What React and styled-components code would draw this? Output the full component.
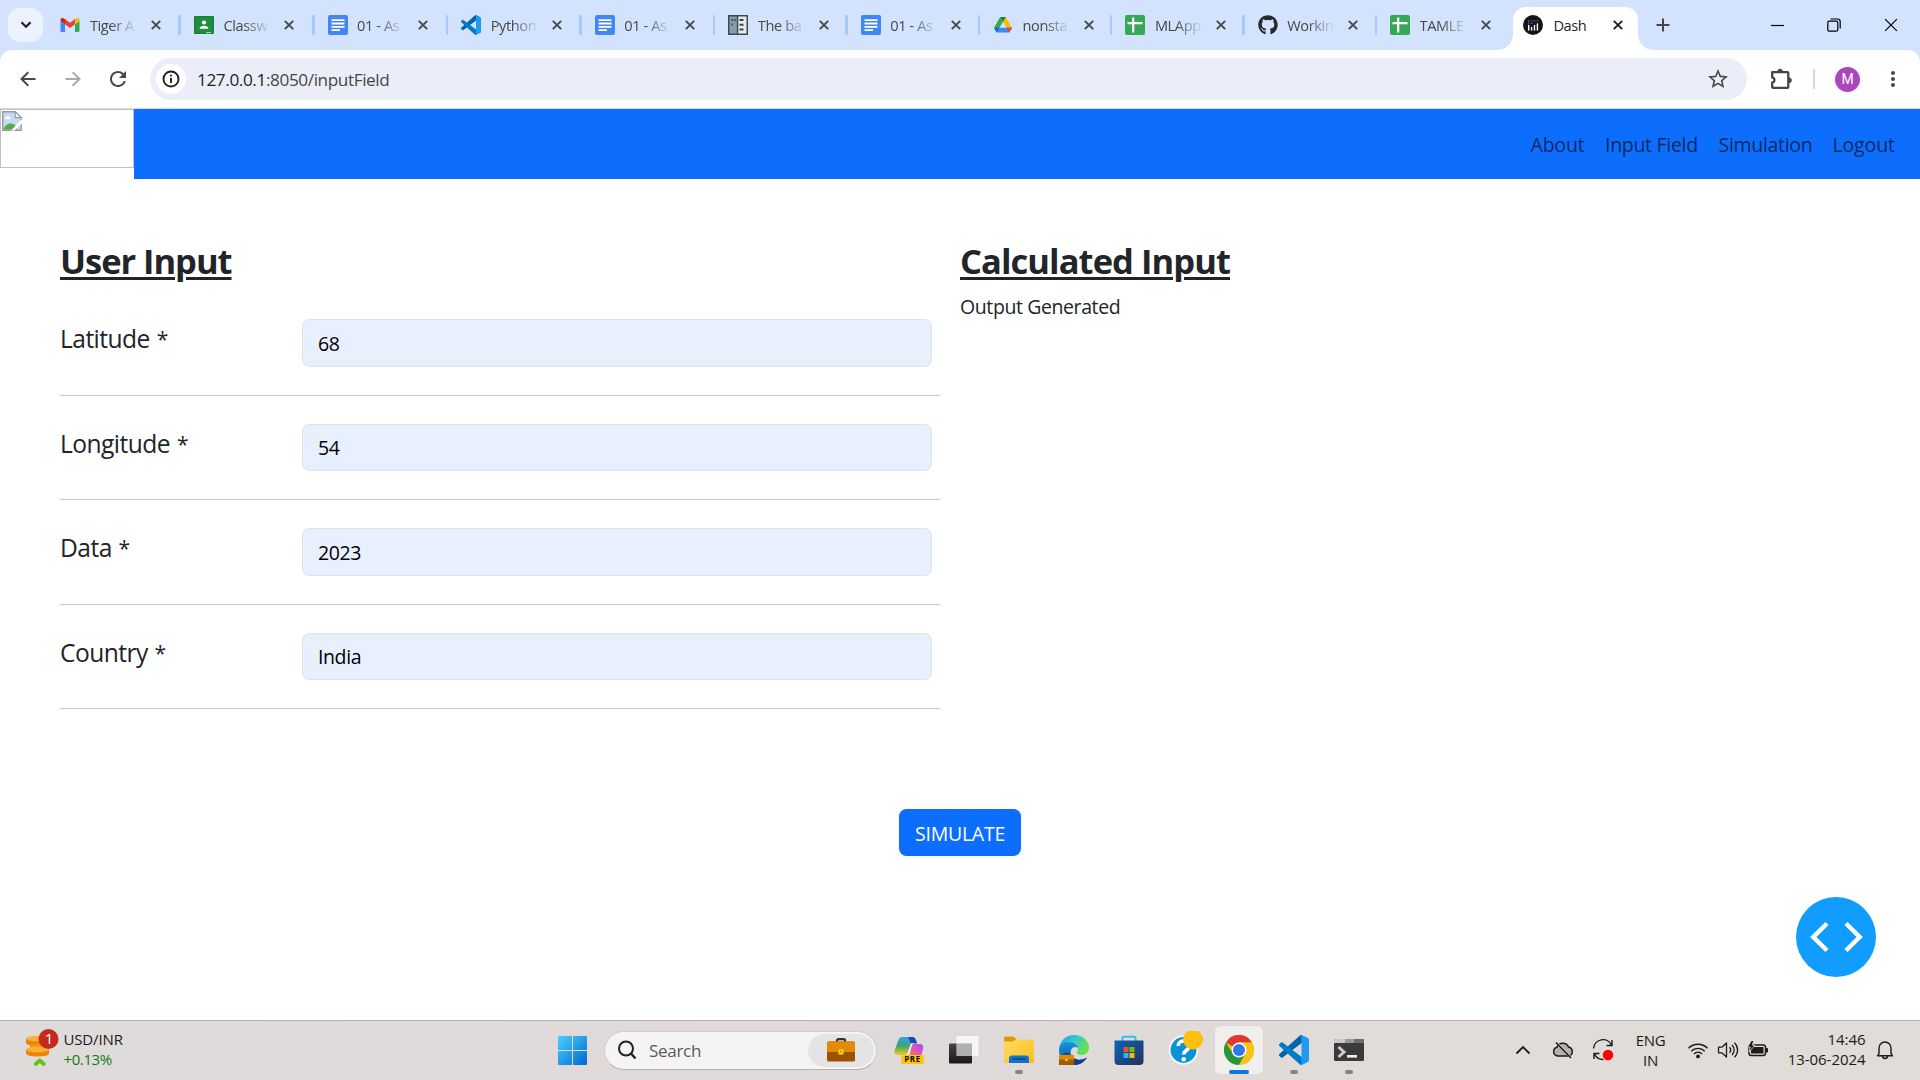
import React from "react";
import styled, { createGlobalStyle } from "styled-components";
import { FaGithub } from "react-icons/fa";
import { MdStarBorder, MdMoreVert, MdRefresh } from "react-icons/md";

const Global = createGlobalStyle`
  * { box-sizing: border-box; }
  html, body { margin: 0; padding: 0; }
  body {
    width: 1920px; height: 1080px; overflow: hidden; background: #fff;
    font-family: "Open Sans", "Noto Sans", sans-serif; color: #212529;
  }
  svg { display: block; flex: none; }
`;

const Screen = styled.div`
  width: 1920px; height: 1080px; display: flex; flex-direction: column; overflow: hidden;
`;

/* ---------- browser chrome ---------- */
const TabStrip = styled.div`
  height: 50px; flex: none; background: #d3e3fd; display: flex; align-items: flex-start;
`;
const TabSearch = styled.div`
  margin: 8px 4.4px 0 8px; width: 35px; height: 34px; border-radius: 12px; background: #ecf2fe;
  display: flex; align-items: center; justify-content: center;
`;
const Tab = styled.div`
  width: ${p => p.$w}px; height: 50px; padding-left: 13px; display: flex; align-items: center; flex: none;
`;
const ActiveTab = styled(Tab)`
  position: relative; margin: 7px 0 0 4px; width: 125px; height: 43px; padding: 0 0 7px 10px;
  background: #fff; border-radius: 13px 13px 0 0;
  &::before, &::after {
    content: ""; position: absolute; bottom: 0; width: 15px; height: 15px;
  }
  &::before { left: -15px; background: radial-gradient(circle at 0 0, transparent 14.5px, #fff 15px); }
  &::after { right: -15px; background: radial-gradient(circle at 100% 0, transparent 14.5px, #fff 15px); }
`;
const TabTitle = styled.span`
  margin-left: ${p => (p.$active ? 10 : 9.5)}px; width: ${p => p.$w || 46}px; font-size: 14.6px; line-height: 20px; letter-spacing: ${p => p.$ls ?? -0.4}px;
  white-space: nowrap; color: ${p => (p.$active ? "#1f1f1f" : "#474747")};
  ${p => !p.$active && "-webkit-mask-image: linear-gradient(90deg, #000 45%, rgba(0,0,0,.1) 98%);"}
`;
const CloseSlot = styled.span`
  margin-left: ${p => p.$ml ?? 15}px; width: 12px; display: flex;
`;
const TabDivider = styled.span`
  margin-left: auto; width: 2.5px; height: 20px; border-radius: 1px; background: #a8c7fa;
`;
const NewTab = styled.div`
  margin: 18px 0 0 18px; width: 14px; height: 14px;
`;
const WindowButtons = styled.div`
  margin: 17px 22px 0 auto; display: flex; gap: 43px; align-items: center; height: 15px;
`;
const Toolbar = styled.div`
  height: 59px; flex: none; background: #d3e3fd;
`;
const ToolbarInner = styled.div`
  height: 59px; border-radius: 12px 12px 0 0; background: #fff; border-bottom: 1px solid #d5dbe0;
  display: flex; align-items: center;
`;
const NavIcon = styled.div`
  width: ${p => p.$w}px; display: flex; justify-content: center;
`;
const Omnibox = styled.div`
  width: 1597px; height: 42px; border-radius: 21px; background: #ebeef8;
  display: flex; align-items: center; padding: 0 17.5px 0 6px;
`;
const InfoBadge = styled.div`
  width: 30px; height: 30px; border-radius: 50%; background: #fff; display: flex; align-items: center; justify-content: center;
`;
const Url = styled.span`
  margin: 2px 0 0 11px; font-size: 17.2px; line-height: 24px; color: #474747; flex: 1; letter-spacing: ${p => p.$ls}px;
  b { font-weight: 400; color: #1f1f1f; }
`;
const ToolbarRule = styled.span`
  width: 2px; height: 20px; background: #c6dafc; margin: 0 20px 0 21px;
`;
const Avatar = styled.span`
  width: 25px; height: 25px; border-radius: 50%; background: #ab47bc; color: #fff; font: 400 14px/25px Roboto, sans-serif; text-align: center;
`;

/* ---------- page ---------- */
const NavBar = styled.nav`
  height: 70px; flex: none; background: #0d6efd; display: flex; align-items: stretch; padding-right: 25px;
`;
const Brand = styled.div`
  width: 134px; background: #fff; margin-right: auto;
`;
const MissingImage = styled.div`
  width: 134px; height: 59px; border: 1px solid #c0c0c0; padding: 1px;
`;
const NavLinkText = styled.a`
  width: ${p => p.$w}px; margin-left: 20.5px; font-size: 19.5px; line-height: 71px; letter-spacing: ${p => p.$ls}px;
  white-space: nowrap; color: rgba(0, 0, 0, 0.65);
`;
const Page = styled.main`
  height: 841px; flex: none; padding: 61px 60px 0; position: relative; background: #fff;
`;
const Columns = styled.div`
  display: grid; grid-template-columns: 880px 1fr; column-gap: 20px; height: 539px;
`;
const Column = styled.section`
  display: flex; flex-direction: column; align-items: stretch;
`;
const Heading = styled.h2`
  margin: 0; height: ${p => p.$h}px; font-size: 34.5px; line-height: 42px; font-weight: 700; letter-spacing: ${p => p.$ls}px;
  text-decoration: underline; text-decoration-thickness: 3px; text-underline-offset: 3px; color: #212529; white-space: nowrap;
`;
const Output = styled.div`
  font-size: 19.5px; line-height: 30px; letter-spacing: ${p => p.$ls}px;
`;
const Field = styled.div`
  height: 76.5px; margin-bottom: 28px; border-bottom: 1px solid #c7c8c9; display: flex; align-items: flex-start;
`;
const Label = styled.label`
  width: 242px; font-size: 24.6px; line-height: 40px; letter-spacing: -0.55px; white-space: nowrap;
`;
const Star = styled.span`
  margin-left: 1px; font-size: 21px; vertical-align: 1px;
`;
const Input = styled.input`
  width: 630px; height: 47.5px; border: 1.25px solid #dee2e6; border-radius: 7.5px; background: #e8f0fe; outline: 0;
  padding: 0 15px 0; font: 19.5px "Open Sans", "Noto Sans", sans-serif; letter-spacing: -0.4px; color: #000;
`;
const Simulate = styled.button`
  display: block; margin: 30px auto 0; width: 122px; height: 47px; border: 0; border-radius: 7.5px; background: #0d6efd; color: #fff;
  padding: 1px 0 0; font: 19.5px "Open Sans", "Noto Sans", sans-serif; letter-spacing: ${p => p.$ls}px;
`;
const DebugButton = styled.div`
  position: absolute; right: 44px; bottom: 43px; width: 80px; height: 80px; border-radius: 50%; background: #119dff;
`;

/* ---------- taskbar ---------- */
const Taskbar = styled.footer`
  height: 60px; flex: none; border-top: 1px solid #b0adac; display: flex; align-items: center; padding-bottom: 1px;
  background: linear-gradient(90deg, #dfdbda 0%, #dfdad9 50%, #e1dcd7 73%, #e0dcd8 100%);
`;
const Widget = styled.div`
  width: 545px; padding-left: 25px; display: flex; align-items: center; margin-top: -3px;
`;
const WidgetText = styled.div`
  margin-left: 4.5px; font-size: 15px; line-height: 20px; letter-spacing: -0.15px; color: #1b1b1b;
  div + div { color: #107c10; letter-spacing: -0.4px; }
`;
const Cell = styled.div`
  position: relative; width: ${p => p.$w || 55}px; height: 58px; display: flex; align-items: center; justify-content: center;
`;
const Tile = styled(Cell)`
  &::after {
    content: ""; position: absolute; left: 50%; bottom: 5px; height: 4px; border-radius: 2px;
    width: ${p => (p.$active ? 20 : 8)}px; margin-left: ${p => (p.$active ? -10 : -4)}px;
    background: ${p => (p.$active ? "#0a78d4" : "#868382")};
    display: ${p => (p.$running || p.$active ? "block" : "none")};
  }
`;
const ActivePlate = styled.div`
  width: 48px; height: 48px; border-radius: 5px; background: #f1efee; box-shadow: 0 0 1px #aaa6; display: flex; align-items: center; justify-content: center;
`;
const SearchPill = styled.div`
  width: 273px; height: 39px; margin: 0 4.5px 0 4px; border-radius: 20px; background: #f5f4f4; border: 1px solid #cfcbca; border-bottom-color: #b5b1b0;
  display: flex; align-items: center; padding: 0 2px 0 12px; font-size: 17px; color: #5a5a5a; letter-spacing: -0.3px;
`;
const SearchLabel = styled.span`
  margin: 0 0 0 12px; flex: 1;
`;
const SearchBadge = styled.span`
  width: 66px; height: 33px; border-radius: 17px; background: #e5e4e4; display: flex; align-items: center; justify-content: center;
`;
const Tray = styled.div`
  margin-left: 126px; display: flex; align-items: center; color: #1b1b1b;
`;
const TrayText = styled.div`
  width: ${p => p.$w}px; font-size: 15px; line-height: 20px; text-align: ${p => p.$align || "center"}; letter-spacing: ${p => p.$ls || 0}px; margin-right: ${p => p.$mr || 0}px;
  margin-top: ${p => p.$mt ?? -1}px;
`;

/* ---------- icons ---------- */
const Cross = ({ s = 10, w = 1.9, c = "#474747" }) => (
  <svg width={s} height={s} viewBox="0 0 10 10"><path d="M.8 .8 9.2 9.2M9.2 .8 .8 9.2" stroke={c} strokeWidth={w} /></svg>
);
const Gmail = () => (
  <svg width="20" height="20" viewBox="0 0 20 20">
    <path d="M.5 6v9.8c0 .7.5 1.2 1.2 1.2H5V9.2z" fill="#4285f4" />
    <path d="M19.5 6v9.8c0 .7-.5 1.2-1.2 1.2H15V9.2z" fill="#34a853" />
    <path d="M15 4.2v5l4.5-3.3V5c0-2-2-2.600-3.400-1.600z" fill="#fbbc04" />
    <path d="M5 9.200V4l5 3.800L15 4v5.200L10 13z" fill="#ea4335" />
    <path d="M.5 5v1L5 9.200v-5L3.900 3.400C2.500 2.400.5 3 .5 5z" fill="#c5221f" />
  </svg>
);
const Classroom = () => (
  <svg width="20" height="20" viewBox="0 0 20 20">
    <rect x="0" y="1" width="20" height="18" rx="1" fill="#188038" /><rect x="1.500" y="2.500" width="17" height="15" fill="#1e8e3e" />
    <circle cx="10" cy="7.500" r="2.100" fill="#fff" /><path d="M5.500 13.800c0-2 2.600-3 4.500-3s4.500 1 4.500 3z" fill="#fff" /><path d="M12 17h5v1.200h-5z" fill="#fff" opacity=".6" />
  </svg>
);
const Docs = () => (
  <svg width="20" height="20" viewBox="0 0 20 20">
    <rect width="20" height="20" rx="2" fill="#4285f4" />
    <path d="M3.500 5.200h13M3.500 8.500h13M3.500 11.900h13M3.500 15.200h8.500" stroke="#fff" strokeWidth="1.800" />
  </svg>
);
const Sheets = () => (
  <svg width="20" height="20" viewBox="0 0 20 20">
    <rect width="20" height="20" rx="2" fill="#34a853" /><path d="M8.200 2.500v15M2.500 8.200h15" stroke="#fff" strokeWidth="2.200" />
  </svg>
);
const Drive = () => (
  <svg width="20" height="20" viewBox="0 0 20 20">
    <path d="M7.200 2h5.600L10 6.800 3.800 17.400 1 12.700z" fill="#34a853" />
    <path d="M7.200 2h5.600L19 12.700h-5.600z" fill="#fbbc04" />
    <path d="M7.200 2h5.600L10 6.800z" fill="#188038" />
    <path d="M6.600 12.700H19l-2.800 4.700H3.800z" fill="#4285f4" />
    <path d="M13.400 12.700H19l-2.800 4.700z" fill="#ea4335" />
    <path d="M6.600 12.700H1l2.800 4.700z" fill="#1967d2" />
  </svg>
);
const VsCode = ({ s = 20 }) => (
  <svg width={s} height={s} viewBox="0 0 100 100">
    <path d="M96.500 10.800 75.900.9a6.200 6.200 0 0 0-7.100 1.200L1.300 63.600a4.200 4.200 0 0 0 0 6.200l5.500 5a4.200 4.200 0 0 0 5.300.2L93.400 13.400c2.700-2.100 6.600-.1 6.600 3.300v-.3a6.300 6.300 0 0 0-3.500-5.600z" fill="#0065a9" />
    <path d="m96.500 89.200-20.600 9.900a6.200 6.200 0 0 1-7.100-1.200L1.300 36.400a4.200 4.200 0 0 1 0-6.200l5.500-5a4.200 4.200 0 0 1 5.300-.2l81.300 61.600c2.700 2.100 6.600.1 6.600-3.300v.3a6.300 6.300 0 0 1-3.500 5.600z" fill="#007acc" />
    <path d="M75.900 99.100a6.200 6.200 0 0 1-7.100-1.200c2.300 2.300 6.200.7 6.200-2.600V4.700c0-3.300-3.900-4.900-6.200-2.600A6.200 6.200 0 0 1 75.900.9l20.600 9.900a6.300 6.300 0 0 1 3.500 5.600v67.200a6.300 6.300 0 0 1-3.500 5.600z" fill="#1f9cf0" />
  </svg>
);
const Building = () => (
  <svg width="20" height="20" viewBox="0 0 20 20">
    <path d="M0 0h20v20H0z" fill="#3c4b52" /><path d="M1.500 1.500h7.300v17H1.500z" fill="#8a9ba8" /><path d="M10.300 1.500h8.200v17h-8.200z" fill="#e6eaec" />
    <path d="M3.500 4h1.500v2H3.500zM6.200 4h1.500v2H6.200zM3.500 8.500h1.500v2H3.500zM11.500 4h4v2h-4zM11.500 8.800h4v2h-4zM11.500 13.500h4v2h-4z" fill="#37474f" />
  </svg>
);
const DashLogo = () => (
  <svg width="20" height="20" viewBox="0 0 20 20">
    <circle cx="10" cy="10" r="10" fill="#141518" />
    <path d="M5.700 10.500V15M8.600 12.500V15M11.500 10.500V15M14.400 9V15" stroke="#fff" strokeWidth="1.400" strokeLinecap="round" />
    <path d="M5 6h1.400M5 8h1.400" stroke="#ff4fa3" strokeWidth="1.200" /><path d="M8 6h1.400M8 8.500h1.400M10.800 6h1.400M13.700 6h1.400" stroke="#7a6cf0" strokeWidth="1.200" />
  </svg>
);
const Arrow = ({ flip, c }) => (
  <svg width="16" height="16" viewBox="0 0 16 16" transform={flip ? "rotate(180)" : undefined}>
    <path d="M15.500 8H1.800M8.300 1.200 1.500 8l6.800 6.800" fill="none" stroke={c} strokeWidth="2" />
  </svg>
);
const BrokenImage = () => (
  <svg width="20" height="20" viewBox="0 0 20 20">
    <path d="M.7.7h12.500l6 6v12.500H.7z" fill="#c5d9fb" stroke="#9a9a9a" strokeWidth="1.400" />
    <path d="M4 6.500c.3-1.800 3-1.800 3.300-.2 1.500-.2 1.800 1.700.4 2H3.700c-1.300-.2-1-1.700.3-1.800z" fill="#fff" />
    <path d="M1.400 18.500c2-6.500 9.500-8.500 13.600-2v2z" fill="#5aac3c" />
    <path d="M13.200.7v6h6z" fill="#fff" stroke="#9a9a9a" strokeWidth="1.200" /><path d="m20 8-11 11.500h3.500L20 12.500z" fill="#fff" />
  </svg>
);
const Puzzle = () => (
  <svg width="22" height="22" viewBox="0 0 22 22">
    <path d="M2.200 4.200h15.200q.9 0 .9.900v13.800q0 .9-.9.900H3.100q-.9 0-.9-.9v-4.200a2.700 2.700 0 0 0 0-5.300z" fill="none" stroke="#474747" strokeWidth="2.300" strokeLinejoin="round" />
    <path d="M7.600 3.500a2.500 2.500 0 0 1 5 0zM19 9.800a2.500 2.500 0 0 1 0 5z" fill="#474747" stroke="#474747" strokeWidth=".6" />
  </svg>
);
const Coins = () => (
  <svg width="34" height="40" viewBox="0 0 34 40">
    <path d="M1 9.500v4.500c0 1.500 4 3 10 3s13-1.200 13-3V9.500z" fill="#e8860c" /><ellipse cx="12" cy="9.500" rx="11" ry="2.800" fill="#fdb23c" />
    <path d="M5 15v5c0 1 3 2.500 10 2.500s9-1.500 9-2.500v-5z" fill="#f29111" />
    <path d="M1 20.500v4c0 1.700 5 3 11.500 3S24 26.200 24 24.500v-4z" fill="#ea850a" /><ellipse cx="12.500" cy="20.500" rx="11.500" ry="2.900" fill="#fdae33" />
    <path d="m10.800 35 4-3.500 4 3.500" fill="none" stroke="#5cc414" strokeWidth="3.700" strokeLinecap="round" strokeLinejoin="round" />
    <circle cx="23.500" cy="10" r="10" fill="#c42b1c" /><text x="24" y="15.300" textAnchor="middle" fontSize="15" fill="#fff">1</text>
  </svg>
);
const Windows = () => (
  <svg width="29" height="29" viewBox="0 0 29 29">
    <defs><linearGradient id="win" x1="0" y1="0" x2="1" y2="1"><stop offset="0" stopColor="#4cd0ff" /><stop offset="1" stopColor="#0067cf" /></linearGradient></defs>
    <path d="M1 0h13v14H0V1q0-1 1-1zM15 0h13q1 0 1 1v13H15zM0 15h14v14H1q-1 0-1-1zM15 15h14v13q0 1-1 1H15z" fill="url(#win)" />
  </svg>
);
const Magnifier = () => (
  <svg width="20" height="20" viewBox="0 0 20 20"><circle cx="9" cy="8.500" r="7" fill="none" stroke="#222" strokeWidth="2" /><path d="m14 13.500 4.500 5" stroke="#222" strokeWidth="2.400" /></svg>
);
const Briefcase = ({ s = 28 }) => (
  <svg width={s} height={s * 0.857} viewBox="0 0 28 24">
    <path d="M10 4V2.500Q10 1.200 11.500 1.200h5Q18 1.200 18 2.500V4" fill="none" stroke="#333" strokeWidth="2.200" />
    <rect y="3.500" width="28" height="20" rx="1.500" fill="#9c5300" /><path d="M0 14V5q0-1.500 1.500-1.500h25Q28 3.500 28 5v9z" fill="#e58a04" />
    <rect x="11.500" y="11.500" width="5" height="5" fill="#f9dc1c" /><rect x="13" y="13" width="2" height="1.500" fill="#c98a00" />
  </svg>
);
const Copilot = () => (
  <svg width="30" height="30" viewBox="0 0 30 30">
    <defs>
      <linearGradient id="cpA" x1="0" y1="0" x2="0" y2="1"><stop offset="0" stopColor="#29a3ee" /><stop offset=".5" stopColor="#3fa66b" /><stop offset="1" stopColor="#f3c722" /></linearGradient>
      <linearGradient id="cpB" x1="1" y1="0" x2="0" y2="1"><stop offset="0" stopColor="#a04df0" /><stop offset=".6" stopColor="#e359a8" /><stop offset="1" stopColor="#ff8a4c" /></linearGradient>
    </defs>
    <path d="M9 2h9c2.500 0 3.500 2 4.200 4l.8 2h-6l-3 9c-.7 2-2 3-4 3H4C1 20 0 18 .8 15L4 6c.8-2.500 2-4 5-4z" fill="url(#cpA)" />
    <path d="M14 2h4c2.500 0 3.500 2 4.200 4l.8 2.500h-6z" fill="#1a45c8" />
    <path d="M17 8.500h3L16.500 20H11c1.500-.5 2.500-1.500 3-3z" fill="#f4ecef" />
    <path d="M20 9h6c3 0 3.500 2.500 3 5l-2 7H15l2.500-9c.5-2 1-3 2.500-3z" fill="url(#cpB)" />
    <rect x="7" y="20" width="23" height="9" rx="2" fill="#fdc60a" /><text x="18.500" y="27.300" textAnchor="middle" fontSize="8" fontWeight="700" letterSpacing=".5" fill="#111">PRE</text>
  </svg>
);
const TaskView = () => (
  <svg width="30" height="30" viewBox="0 0 30 30">
    <defs><linearGradient id="tv" x1="0" y1="0" x2="0" y2="1"><stop offset="0" stopColor="#454443" /><stop offset="1" stopColor="#181818" /></linearGradient></defs>
    <rect x="0" y="8.500" width="23" height="20" rx="1" fill="url(#tv)" /><rect x="7.500" y="1" width="22" height="20" rx="1" fill="#fff" opacity=".75" /><path d="M7.500 8.500H23V21H7.500z" fill="#999" opacity=".55" />
  </svg>
);
const Explorer = () => (
  <svg width="30" height="28" viewBox="0 0 30 28">
    <defs><linearGradient id="ex" x1="0" y1="0" x2="1" y2="1"><stop offset="0" stopColor="#ffdc62" /><stop offset="1" stopColor="#fbbd1f" /></linearGradient></defs>
    <path d="M0 2q0-1.500 1.500-1.500h8l3 3V9H0z" fill="#dd9a05" /><path d="M0 5.500h9l3-2h16.500Q30 3.500 30 5v22H0z" fill="url(#ex)" />
    <path d="M5 27v-4.500Q5 19.500 8 19.500h14q3 0 3 3V27z" fill="#1173cf" /><path d="M8.500 23h13" stroke="#0a3f80" strokeWidth="1.300" />
  </svg>
);
const Edge = () => (
  <svg width="30" height="30" viewBox="0 0 30 30">
    <defs>
      <linearGradient id="egA" x1="0" y1="0" x2="1" y2=".4"><stop offset="0" stopColor="#1fa2dc" /><stop offset=".5" stopColor="#33c4d4" /><stop offset="1" stopColor="#66e24e" /></linearGradient>
      <linearGradient id="egB" x1="0" y1="0" x2="0" y2="1"><stop offset="0" stopColor="#1394e0" /><stop offset="1" stopColor="#0c55a8" /></linearGradient>
    </defs>
    <path d="M0 14C.5 6 7 0 15 0c9 0 15 6 15 12.500 0 5-3.500 7.500-7 7.500-3 0-5-1-5-2.500 0-1 1-1.500 1-3.500C19 10.500 15.500 7.500 10 7.500 5 7.500 1 10 0 14z" fill="url(#egA)" />
    <path d="M0 15c0-5 4.500-8 9.500-8 5.500 0 9 3 9.500 6-4-3-8.500 1-7 6 1.500 6 8.500 8 16 3.500-2.500 4.500-7 7.500-13 7.500C6.500 30 0 23.500 0 15z" fill="url(#egB)" />
    <path d="M12 19c1.500 5 8.500 8 16 3.500-3 4.500-7 7.500-13 7.500z" fill="#123f86" />
    <rect x="0" y="20" width="15" height="10" fill="#a35a05" /><path d="M0 20h15v4.500H0z" fill="#e08a08" /><path d="M5 20v-1.300h5V20" fill="none" stroke="#333" /><rect x="6.500" y="24" width="2" height="2.200" fill="#ffe11c" />
  </svg>
);
const Store = () => (
  <svg width="30" height="30" viewBox="0 0 30 30">
    <defs><linearGradient id="st" x1="0" y1="0" x2="1" y2="1"><stop offset="0" stopColor="#0a66b5" /><stop offset="1" stopColor="#26305c" /></linearGradient></defs>
    <path d="M8.500 6V3Q8.500 1.800 10 1.800h10q1.500 0 1.500 1.200v3" fill="none" stroke="#2fc1f3" strokeWidth="2" />
    <path d="M.5 5.500h29V26q0 4-4 4h-21q-4 0-4-4z" fill="url(#st)" />
    <path d="M9.500 12h5v5h-5z" fill="#f25022" /><path d="M15.500 12h5v5h-5z" fill="#7fba00" /><path d="M9.500 18h5v5h-5z" fill="#2fb4f2" /><path d="M15.500 18h5v5h-5z" fill="#ffb900" />
  </svg>
);
const Help = () => (
  <svg width="38" height="38" viewBox="0 0 38 38">
    <circle cx="18.500" cy="19" r="14.700" fill="#f4f8fa" /><circle cx="18.500" cy="19" r="12.900" fill="#0a93d4" />
    <path d="M13.200 15c0-7 11.500-6.500 11.500-.5 0 4.500-6 4.500-6 9" fill="none" stroke="#fff" strokeWidth="3.600" /><circle cx="18.700" cy="28.300" r="2.300" fill="#fff" />
    <circle cx="28" cy="10" r="10" fill="#fdc10d" transform="translate(0 -1.500)" />
  </svg>
);
const Chrome = () => (
  <svg width="30" height="30" viewBox="0 0 30 30">
    <circle cx="15" cy="15" r="15" fill="#fbc116" />
    <path d="M15 15 2 7.500A15 15 0 0 1 28 7.500H15z" fill="#dd3a2d" />
    <path d="M2 7.500A15 15 0 0 0 15 30l6.500-11.200L15 15H6.400z" fill="#27963c" />
    <path d="M15 7.500h13A15 15 0 0 1 15 30l6.500-11.200z" fill="#fbc116" />
    <circle cx="15" cy="15" r="7.500" fill="#fff" /><circle cx="15" cy="15" r="6" fill="#2f77ea" />
  </svg>
);
const Terminal = () => (
  <svg width="30" height="22" viewBox="0 0 30 22">
    <rect width="30" height="22" rx="1.500" fill="#3a3a3a" /><path d="M0 4V1.500Q0 0 1.500 0H11v4z" fill="#c9c9c9" /><path d="M11 0h9v4h-9z" fill="#999" /><path d="M20 0h8.500Q30 0 30 1.500V4H20z" fill="#6d6d6d" />
    <path d="m4.500 8 5.500 5-5.500 5" fill="none" stroke="#ccc" strokeWidth="3" /><path d="M13 17.300h10" stroke="#f0f0f0" strokeWidth="2.600" />
  </svg>
);
const CloudOff = () => (
  <svg width="22" height="20" viewBox="0 0 22 20">
    <path d="M5.500 16A4.500 4.500 0 0 1 5 7.200 6.300 6.300 0 0 1 16.500 7 4.600 4.600 0 0 1 16.800 16z" fill="#b3b0ae" stroke="#1b1b1b" strokeWidth="1.500" />
    <path d="m5.500 3.500 13 13.500" stroke="#e0dcd9" strokeWidth="2.200" /><path d="m4 2.500 15 15.500" stroke="#1b1b1b" strokeWidth="1.600" />
  </svg>
);
const Sync = () => (
  <svg width="22" height="22" viewBox="0 0 22 22">
    <path d="M1.500 9.500A9.500 9.500 0 0 1 19.500 6M20 1v5.500h-5.500M2 20v-5.500h5.500M2.500 15a9.500 9.500 0 0 0 9 5.500" fill="none" stroke="#1b1b1b" strokeWidth="1.400" />
    <circle cx="16" cy="16" r="5.200" fill="#fe0000" />
  </svg>
);
const Wifi = () => (
  <svg width="22" height="18" viewBox="0 0 22 18">
    <path d="M1.500 7.200a13.300 13.300 0 0 1 19 0M4.200 10.200a9.500 9.500 0 0 1 13.600 0M6.900 12.900a5.700 5.700 0 0 1 8.200 0" fill="none" stroke="#1b1b1b" strokeWidth="1.400" /><circle cx="11" cy="15.400" r="1.900" fill="#1b1b1b" />
  </svg>
);
const Volume = () => (
  <svg width="22" height="18" viewBox="0 0 22 18">
    <path d="M1.500 6.200h3.300L9.500 2v14l-4.700-4.200H1.500z" fill="none" stroke="#1b1b1b" strokeWidth="1.300" strokeLinejoin="round" />
    <path d="M12.500 6.300a4 4 0 0 1 0 5.400M15 4a7 7 0 0 1 0 10M17.500 1.700a10.200 10.200 0 0 1 0 14.600" fill="none" stroke="#1b1b1b" strokeWidth="1.300" />
  </svg>
);
const Battery = () => (
  <svg width="22" height="18" viewBox="0 0 22 18">
    <rect x="2" y="4" width="16.500" height="10.500" rx="2.200" fill="none" stroke="#1b1b1b" strokeWidth="1.500" /><rect x="4" y="6" width="12.500" height="6.500" fill="#1b1b1b" /><path d="M19 7h1q1 0 1 1v2.500q0 1-1 1h-1z" fill="#1b1b1b" />
    <path d="M4.500-.5 .5 6h2.800L2.200 11 8 4.200H5.300L6.800-.5z" fill="#1b1b1b" stroke="#e0dcd9" strokeWidth=".8" />
  </svg>
);
const Bell = () => (
  <svg width="18" height="20" viewBox="0 0 18 20">
    <path d="M3 13.500V8a6 6 0 0 1 12 0v5.500l1.500 2.300h-15z" fill="none" stroke="#1b1b1b" strokeWidth="1.400" strokeLinejoin="round" /><path d="M6.500 16a2.500 2.500 0 0 0 5 0" fill="none" stroke="#1b1b1b" strokeWidth="1.400" />
  </svg>
);

const tabs = [
  [Gmail, "Tiger A"], [Classroom, "Classw"], [Docs, "01 - As"], [VsCode, "Python"], [Docs, "01 - As"],
  [Building, "The ba"], [Docs, "01 - As"], [Drive, "nonsta"], [Sheets, "MLApp"],
  [() => <FaGithub size={20} color="#24292f" />, "Workin"], [Sheets, "TAMLE"],
];
const fields = [["Latitude", "68"], ["Longitude", "54"], ["Data", "2023"], ["Country", "India"]];

export default function App() {
  return (
    <Screen>
      <Global />
      <TabStrip>
        <TabSearch><svg width="12" height="8" viewBox="0 0 12 8"><path d="m1.500 1.300 4.500 4.500 4.500-4.500" fill="none" stroke="#1f1f1f" strokeWidth="2.200" /></svg></TabSearch>
        {tabs.map(([Icon, title], i) => (
          <Tab key={i} $w={i < 5 ? 133.6 : 132.35}>
            <Icon />
            <TabTitle>{title}</TabTitle>
            <CloseSlot><Cross /></CloseSlot>
            {i < tabs.length - 1 && <TabDivider />}
          </Tab>
        ))}
        <ActiveTab>
          <DashLogo />
          <TabTitle $active $w={50}>Dash</TabTitle>
          <CloseSlot $ml={10}><Cross c="#1f1f1f" /></CloseSlot>
        </ActiveTab>
        <NewTab><svg width="14" height="14" viewBox="0 0 14 14"><path d="M7 .5v13M.5 7h13" stroke="#474747" strokeWidth="2" /></svg></NewTab>
        <WindowButtons>
          <svg width="13" height="14" viewBox="0 0 13 14"><path d="M0 7.500h13" stroke="#000" strokeWidth="1.200" /></svg>
          <svg width="14" height="14" viewBox="0 0 14 14"><rect x=".8" y="3.200" width="10" height="10" rx="1.500" fill="none" stroke="#000" strokeWidth="1.200" /><path d="M3.500 1h7A2.700 2.700 0 0 1 13.200 3.700v6.800" fill="none" stroke="#000" strokeWidth="1.200" /></svg>
          <Cross s={14} w={0.9} c="#000" />
        </WindowButtons>
      </TabStrip>
      <Toolbar>
        <ToolbarInner>
          <NavIcon $w={55}><Arrow c="#474747" /></NavIcon>
          <NavIcon $w={35}><Arrow flip c="#a9a9a9" /></NavIcon>
          <NavIcon $w={55}><MdRefresh size={24} color="#474747" /></NavIcon>
          <NavIcon $w={5} />
          <Omnibox>
            <InfoBadge>
              <svg width="18" height="18" viewBox="0 0 18 18"><circle cx="9" cy="9" r="7.500" fill="none" stroke="#1f1f1f" strokeWidth="1.900" /><path d="M9 8v5M9 4.800v1.800" stroke="#1f1f1f" strokeWidth="1.900" /></svg>
            </InfoBadge>
            <Url $ls={-0.4}><b>127.0.0.1</b>:8050/inputField</Url>
            <MdStarBorder size={24} color="#474747" />
          </Omnibox>
          <NavIcon $w={23} />
          <Puzzle />
          <ToolbarRule />
          <Avatar>M</Avatar>
          <NavIcon $w={20.5} />
          <MdMoreVert size={24} color="#474747" />
        </ToolbarInner>
      </Toolbar>

      <NavBar>
        <Brand><MissingImage><BrokenImage /></MissingImage></Brand>
        <NavLinkText $w={54} $ls={-0.2}>About</NavLinkText>
        <NavLinkText $w={93} $ls={-0.3}>Input Field</NavLinkText>
        <NavLinkText $w={93.5} $ls={-0.3}>Simulation</NavLinkText>
        <NavLinkText $w={62.5} $ls={-0.15}>Logout</NavLinkText>
      </NavBar>
      <Page>
        <Columns>
          <Column>
            <Heading $h={79.25} $ls={-1.03}>User Input</Heading>
            {fields.map(([label, value]) => (
              <Field key={label}>
                <Label>{label} <Star>*</Star></Label>
                <Input defaultValue={value} />
              </Field>
            ))}
          </Column>
          <Column>
            <Heading $h={52} $ls={-0.93}>Calculated Input</Heading>
            <Output $ls={-0.4}>Output Generated</Output>
          </Column>
        </Columns>
        <Simulate $ls={-0.25}>SIMULATE</Simulate>
        <DebugButton>
          <svg width="80" height="80" viewBox="0 0 80 80"><path d="M31 26.500 17.300 40 31 53.500M50 26.500 63.700 40 50 53.500" fill="none" stroke="#fff" strokeWidth="4.500" /></svg>
        </DebugButton>
      </Page>

      <Taskbar>
        <Widget>
          <Coins />
          <WidgetText><div>USD/INR</div><div>+0.13%</div></WidgetText>
        </Widget>
        <Cell><Windows /></Cell>
        <SearchPill>
          <Magnifier />
          <SearchLabel>Search</SearchLabel>
          <SearchBadge><Briefcase /></SearchBadge>
        </SearchPill>
        <Tile><Copilot /></Tile>
        <Tile><TaskView /></Tile>
        <Tile $running><Explorer /></Tile>
        <Tile><Edge /></Tile>
        <Tile><Store /></Tile>
        <Tile><Help /></Tile>
        <Tile $active><ActivePlate><Chrome /></ActivePlate></Tile>
        <Tile $running><VsCode s={30} /></Tile>
        <Tile $running><Terminal /></Tile>
        <Tray>
          <Cell $w={40}><svg width="16" height="10" viewBox="0 0 16 10"><path d="m1.500 8.500 6.500-6.500 6.500 6.500" fill="none" stroke="#1b1b1b" strokeWidth="1.800" /></svg></Cell>
          <Cell $w={40}><CloudOff /></Cell>
          <Cell $w={40}><Sync /></Cell>
          <TrayText $w={56} $mr={4} $ls={-0.3}><div>ENG</div><div>IN</div></TrayText>
          <Cell $w={30}><Wifi /></Cell>
          <Cell $w={30}><Volume /></Cell>
          <Cell $w={30}><Battery /></Cell>
          <TrayText $w={93} $align="right" $ls={-0.05} $mr={9} $mt={-3}><div>14:46</div><div>13-06-2024</div></TrayText>
          <Cell $w={20}><Bell /></Cell>
        </Tray>
      </Taskbar>
    </Screen>
  );
}
